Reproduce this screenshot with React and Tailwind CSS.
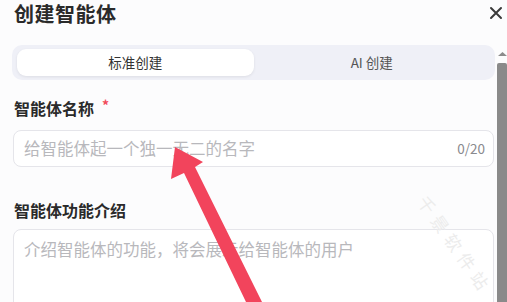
const font = { fontFamily: '"Noto Sans CJK SC", "Noto Sans", sans-serif' };

const App = () => {
  return (
    <div
      className="relative w-[507px] h-[302px] overflow-hidden bg-[#fcfcfd] text-[#2a2a2a]"
      style={font}
    >
      <div className="flex items-center justify-between h-[27px] pl-[14px] pr-[3px]">
        <h1 className="text-[20px] font-bold leading-[24px] tracking-[0.5px]">创建智能体</h1>
        <svg width="14" height="14" viewBox="0 0 14 14" className="mr-[1px] -mt-[2px]">
          <path d="M2 2L12 12M12 2L2 12" stroke="#3a3a3a" strokeWidth="2" strokeLinecap="round" />
        </svg>
      </div>

      <div className="flex mt-[18px]">
        <div className="flex-1 pl-[12px] pr-[2px]">
          <div className="flex h-[35px] py-[4px] px-[5px] rounded-[10px] bg-[#eff0f7]">
            <button className="flex-1 rounded-[9px] bg-white shadow-[0_1px_3px_rgba(0,0,0,0.08)] text-[13.5px] text-[#333] leading-none">
              标准创建
            </button>
            <button className="flex-1 text-[13.5px] text-[#555] leading-none">AI 创建</button>
          </div>

          <div className="mt-[17px] h-[22px] flex items-center pl-[2px] text-[16px] font-bold">
            智能体名称
            <span className="ml-[8px] text-[#f24a5a] text-[14px] -mt-[6px]">*</span>
          </div>

          <div className="mt-[11px] h-[37px] ml-[1px] mr-[1px] flex items-center justify-between rounded-[8px] border border-[#e5e5ea] bg-white pl-[10px] pr-[8px]">
            <span className="text-[16.5px] text-[#b8b8bc]">给智能体起一个独一无二的名字</span>
            <span className="text-[13.5px] text-[#8a8a8e]">0/20</span>
          </div>

          <div className="mt-[32px] h-[22px] flex items-center pl-[2px] text-[16px] font-bold">
            智能体功能介绍
          </div>

          <div className="mt-[8px] h-[100px] ml-[1px] mr-[1px] rounded-[8px] border border-[#e5e5ea] bg-white pl-[10px] pt-[7px]">
            <span className="text-[16.5px] text-[#b8b8bc]">介绍智能体的功能，将会展示给智能体的用户</span>
          </div>
        </div>

        <div className="w-[10px] flex flex-col items-center pt-[7px]">
          <svg width="9" height="4" viewBox="0 0 9 4">
            <path d="M0 4L4.5 0L9 4Z" fill="#8c8c8c" />
          </svg>
          <div className="mt-[7px] w-[10px] h-[260px] rounded-t-[2px] bg-[#8a8a8a]" />
        </div>
      </div>

      <div className="absolute left-[398px] top-[232px] rotate-[55deg] text-[17px] tracking-[6px] text-[#ececec] whitespace-nowrap">
        千景软件站
      </div>

      <svg className="absolute left-0 top-0 pointer-events-none" width="507" height="302" viewBox="0 0 507 302">
        <polygon
          points="175,147 203,162 195,167 262,302 246,302 184,173 171,179"
          fill="#f2445c"
        />
      </svg>
    </div>
  );
};

export default App;
